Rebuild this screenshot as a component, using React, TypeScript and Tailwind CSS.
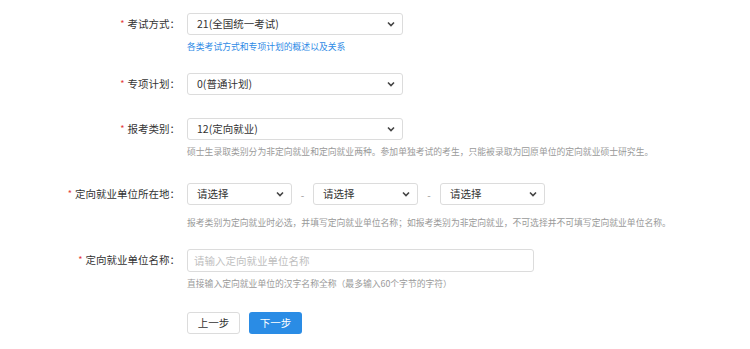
import React from "react";

const font = { fontFamily: '"Noto Sans CJK SC", "Noto Sans", sans-serif' };

function Chevron() {
  return (
    <svg width="8" height="6" viewBox="0 0 8 6" className="shrink-0">
      <path d="M1 1.5 L4 4.5 L7 1.5" fill="none" stroke="#444" strokeWidth="1.6" />
    </svg>
  );
}

function Select({ value, width }: { value: string; width: string }) {
  return (
    <div
      className={`flex h-[22px] items-center justify-between rounded-[3px] border border-[#dcdcdc] bg-white pl-[9px] pr-[7px] text-[10.5px] text-[#333] ${width}`}
    >
      <span>{value}</span>
      <Chevron />
    </div>
  );
}

function Label({ text }: { text: string }) {
  return (
    <div className="flex h-[22px] w-[180px] shrink-0 items-center justify-end text-[10.5px] text-[#333]">
      <span className="mr-[3px] text-[9px] text-[#e4393c]">*</span>
      <span>{text}</span>
    </div>
  );
}

function Hint({ children, blue }: { children: React.ReactNode; blue?: boolean }) {
  return (
    <div className={`h-[12px] text-[8.8px] leading-[12px] ${blue ? "text-[#2f8be6]" : "text-[#9a9a9a]"}`}>
      {children}
    </div>
  );
}

export default function App() {
  return (
    <div className="h-[349px] w-[750px] bg-white" style={font}>
      {/* 考试方式 */}
      <div className="flex gap-[7px] pt-[13px]">
        <Label text="考试方式：" />
        <div className="flex flex-col gap-[6px]">
          <Select value="21(全国统一考试)" width="w-[216px]" />
          <Hint blue>各类考试方式和专项计划的概述以及关系</Hint>
        </div>
      </div>

      {/* 专项计划 */}
      <div className="mt-[20px] flex gap-[7px]">
        <Label text="专项计划：" />
        <Select value="0(普通计划)" width="w-[216px]" />
      </div>

      {/* 报考类别 */}
      <div className="mt-[23px] flex gap-[7px]">
        <Label text="报考类别：" />
        <div className="flex flex-col gap-[6px]">
          <Select value="12(定向就业)" width="w-[216px]" />
          <Hint>硕士生录取类别分为非定向就业和定向就业两种。参加单独考试的考生，只能被录取为回原单位的定向就业硕士研究生。</Hint>
        </div>
      </div>

      {/* 定向就业单位所在地 */}
      <div className="mt-[25px] flex gap-[7px]">
        <Label text="定向就业单位所在地：" />
        <div className="flex flex-col gap-[12px]">
          <div className="flex items-center">
            <Select value="请选择" width="w-[105px]" />
            <span className="w-[21px] text-center text-[10px] text-[#999]">-</span>
            <Select value="请选择" width="w-[105px]" />
            <span className="w-[22px] text-center text-[10px] text-[#999]">-</span>
            <Select value="请选择" width="w-[105px]" />
          </div>
          <Hint>报考类别为定向就业时必选，并填写定向就业单位名称；如报考类别为非定向就业，不可选择并不可填写定向就业单位名称。</Hint>
        </div>
      </div>

      {/* 定向就业单位名称 */}
      <div className="mt-[20px] flex gap-[7px]">
        <Label text="定向就业单位名称：" />
        <div className="flex flex-col gap-[6px]">
          <div className="flex h-[23px] w-[347px] items-center rounded-[3px] border border-[#dcdcdc] bg-white pl-[6px] text-[10.5px] text-[#c0c0c0]">
            请输入定向就业单位名称
          </div>
          <Hint>直接输入定向就业单位的汉字名称全称（最多输入60个字节的字符）</Hint>
        </div>
      </div>

      {/* 按钮 */}
      <div className="mt-[22px] flex gap-[9px] pl-[187px]">
        <button className="h-[22px] w-[53px] rounded-[3px] border border-[#dcdcdc] bg-white text-[10.5px] text-[#333]">
          上一步
        </button>
        <button className="h-[22px] w-[53px] rounded-[3px] bg-[#2a8ce5] text-[10.5px] text-white">
          下一步
        </button>
      </div>
    </div>
  );
}
